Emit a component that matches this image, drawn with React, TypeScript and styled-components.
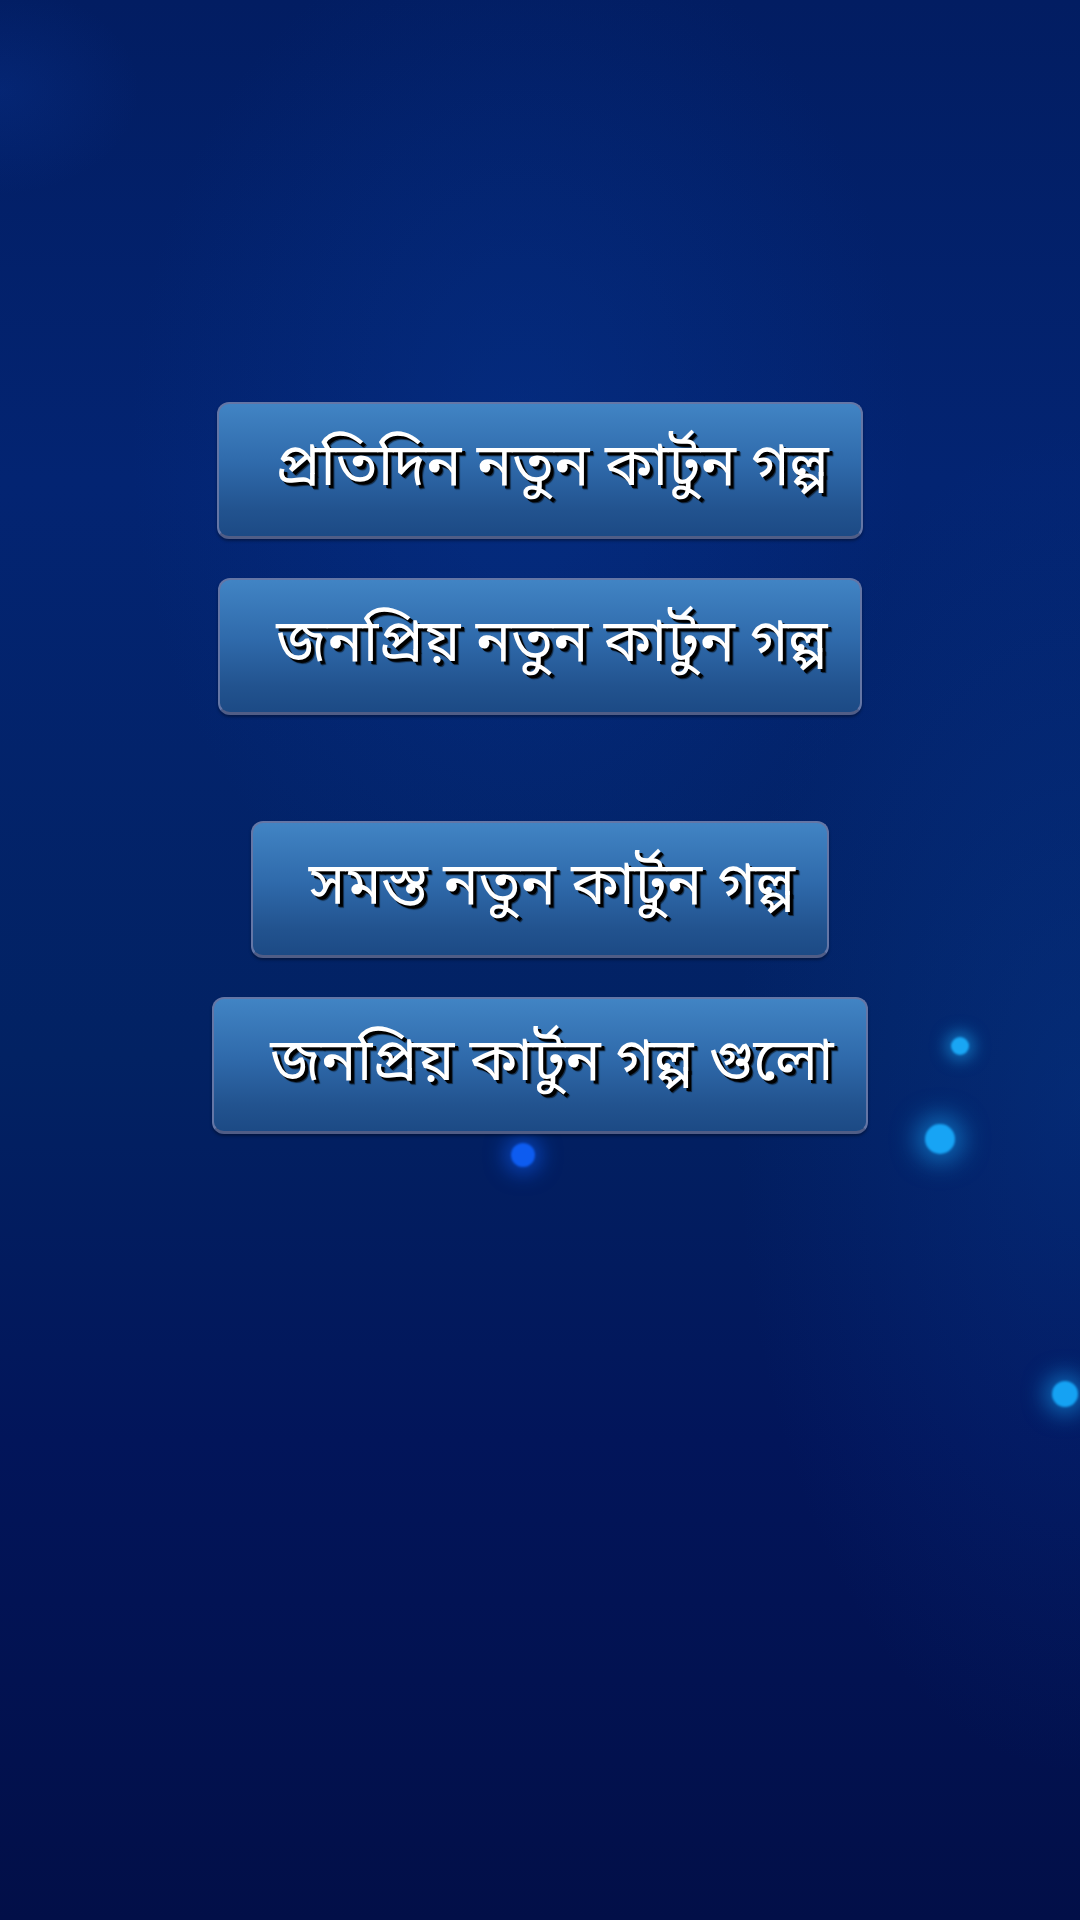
import React from "react";
import styled, { createGlobalStyle } from "styled-components";

const GlobalStyle = createGlobalStyle`
  html, body {
    margin: 0;
    padding: 0;
    background: #021c62;
  }
  #root {
    min-height: 1920px;
  }
`;

const Screen = styled.div`
  position: relative;
  width: 1080px;
  height: 1920px;
  overflow: hidden;
  background:
    radial-gradient(ellipse 200px 150px at 0px 90px, rgba(20, 80, 200, 0.14), transparent 70%),
    radial-gradient(ellipse 520px 700px at 520px 440px, rgba(6, 56, 150, 0.38), transparent 75%),
    radial-gradient(ellipse 460px 900px at 1080px 1100px, rgba(10, 64, 160, 0.3), transparent 75%),
    linear-gradient(180deg, #021d62 0%, #032472 25%, #022263 55%, #02155a 75%, #020f48 100%);
  font-family: "Noto Sans Bengali", "Lohit Bengali", "Mukti", "Noto Sans", sans-serif;
`;

const Menu = styled.main`
  position: relative;
  z-index: 1;
  display: flex;
  flex-direction: column;
  align-items: center;
  gap: 106px;
  padding-top: 402px;
`;

const Group = styled.div`
  display: flex;
  flex-direction: column;
  align-items: center;
  gap: 39px;
`;

const MenuButton = styled.button`
  display: inline-flex;
  align-items: center;
  height: 137px;
  box-sizing: border-box;
  padding: 0 32px 0 56px;
  border: 2px solid #6476a6;
  border-bottom: 3px solid #505d86;
  border-radius: 12px;
  background: linear-gradient(180deg, #4184c4 0%, #2f6aab 45%, #22538f 80%, #1c4a85 100%);
  box-shadow: 0 2px 3px rgba(0, 0, 0, 0.35);
  color: #ffffff;
  font-family: inherit;
  font-size: 59px;
  font-weight: 400;
  line-height: 1;
  white-space: nowrap;
  text-shadow: 3px 3px 0 #000000, 4px 4px 1px rgba(0, 0, 0, 0.6);
  cursor: pointer;
`;

const Glow = styled.span<{ $size: number; $color: string }>`
  position: absolute;
  width: ${(p) => p.$size}px;
  height: ${(p) => p.$size}px;
  margin: ${(p) => -p.$size / 2}px 0 0 ${(p) => -p.$size / 2}px;
  border-radius: 50%;
  background: ${(p) => p.$color};
  box-shadow: 0 0 ${(p) => p.$size * 0.8}px ${(p) => p.$size * 0.3}px ${(p) => p.$color}88;
  filter: blur(1px);
`;

const lights = [
  { x: 960, y: 1046, size: 18, color: "#19a6f4" },
  { x: 940, y: 1139, size: 30, color: "#17a4f5" },
  { x: 1065, y: 1394, size: 26, color: "#15a2f3" },
  { x: 523, y: 1155, size: 24, color: "#0d5cf0" },
];

export default function App() {
  return (
    <>
      <GlobalStyle />
      <Screen>
        {lights.map((l, i) => (
          <Glow key={i} $size={l.size} $color={l.color} style={{ left: l.x, top: l.y }} />
        ))}
        <Menu>
          <Group>
            <MenuButton>প্রতিদিন নতুন কার্টুন গল্প</MenuButton>
            <MenuButton>জনপ্রিয় নতুন কার্টুন গল্প</MenuButton>
          </Group>
          <Group>
            <MenuButton>সমস্ত নতুন কার্টুন গল্প</MenuButton>
            <MenuButton>জনপ্রিয় কার্টুন গল্প গুলো</MenuButton>
          </Group>
        </Menu>
      </Screen>
    </>
  );
}
